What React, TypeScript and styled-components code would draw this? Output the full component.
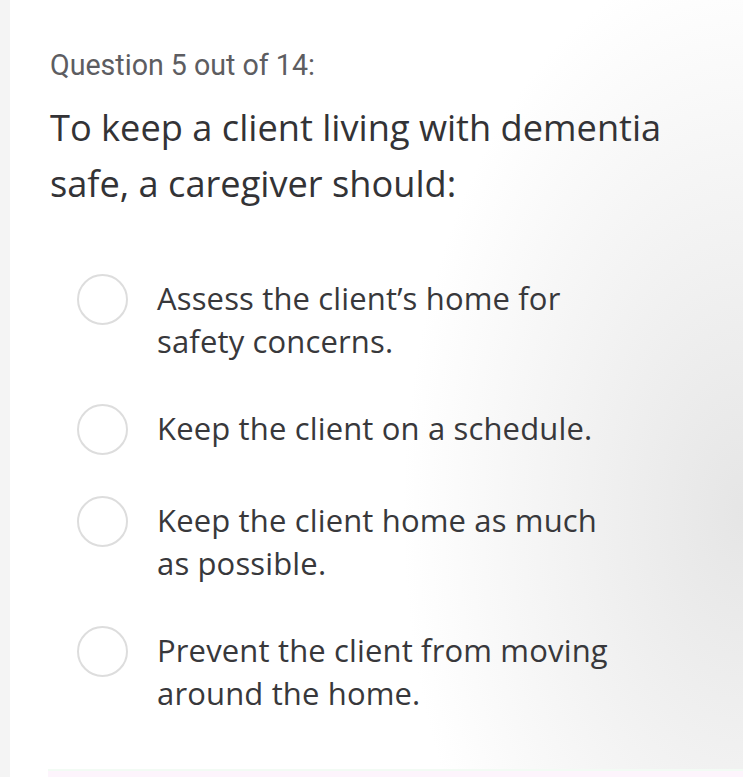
import React from 'react';
import styled, { createGlobalStyle } from 'styled-components';

const GlobalStyle = createGlobalStyle`
  html, body {
    margin: 0;
    padding: 0;
    background: #ffffff;
  }
  body {
    font-family: "Open Sans", "Noto Sans", sans-serif;
    -webkit-font-smoothing: antialiased;
  }
`;

const OPTIONS = [
  'Assess the client’s home for safety concerns.',
  'Keep the client on a schedule.',
  'Keep the client home as much as possible.',
  'Prevent the client from moving around the home.',
];

const Page = styled.div`
  display: flex;
  width: 743px;
  height: 777px;
  overflow: hidden;
`;

const Edge = styled.div`
  width: 10px;
  flex: 0 0 10px;
  background: #f4f4f4;
`;

const Sheet = styled.main`
  flex: 1;
  display: flex;
  flex-direction: column;
  padding: 49px 0 0 40px;
  background:
    radial-gradient(ellipse 340px 560px at 100% 66%, rgba(228, 228, 228, 0.95) 0%, rgba(255, 255, 255, 0) 100%),
    #ffffff;
`;

const Counter = styled.p`
  margin: 0;
  font-family: Roboto, "Noto Sans", sans-serif;
  font-size: 28.6px;
  line-height: 32px;
  color: #5d5d61;
`;

const Question = styled.h1`
  margin: 18px 0 0;
  width: 640px;
  font-size: 36.2px;
  line-height: 56px;
  font-weight: 400;
  color: #333336;
`;

const OptionList = styled.ul`
  list-style: none;
  margin: 66px 0 0;
  padding: 0 0 0 27px;
  display: flex;
  flex-direction: column;
  gap: 44px;
`;

const Option = styled.li`
  display: flex;
  align-items: flex-start;
  gap: 29px;
`;

const Radio = styled.span`
  flex: 0 0 auto;
  box-sizing: border-box;
  width: 51px;
  height: 51px;
  margin-top: -3px;
  border-radius: 50%;
  border: 2px solid #dddddd;
  background: #ffffff;
`;

const OptionText = styled.span`
  width: 460px;
  font-size: 31px;
  line-height: 43px;
  letter-spacing: 0.15px;
  color: #38383b;
`;

const NextEdge = styled.div`
  margin: auto 0 0 -2px;
  height: 6px;
  border-top: 2px solid #f2fbf4;
  background: #fdf4fc;
`;

export default function App() {
  return (
    <>
      <GlobalStyle />
      <Page>
        <Edge />
        <Sheet>
          <Counter>Question 5 out of 14:</Counter>
          <Question>To keep a client living with dementia safe, a caregiver should:</Question>
          <OptionList>
            {OPTIONS.map((text) => (
              <Option key={text}>
                <Radio />
                <OptionText>{text}</OptionText>
              </Option>
            ))}
          </OptionList>
          <NextEdge />
        </Sheet>
      </Page>
    </>
  );
}
